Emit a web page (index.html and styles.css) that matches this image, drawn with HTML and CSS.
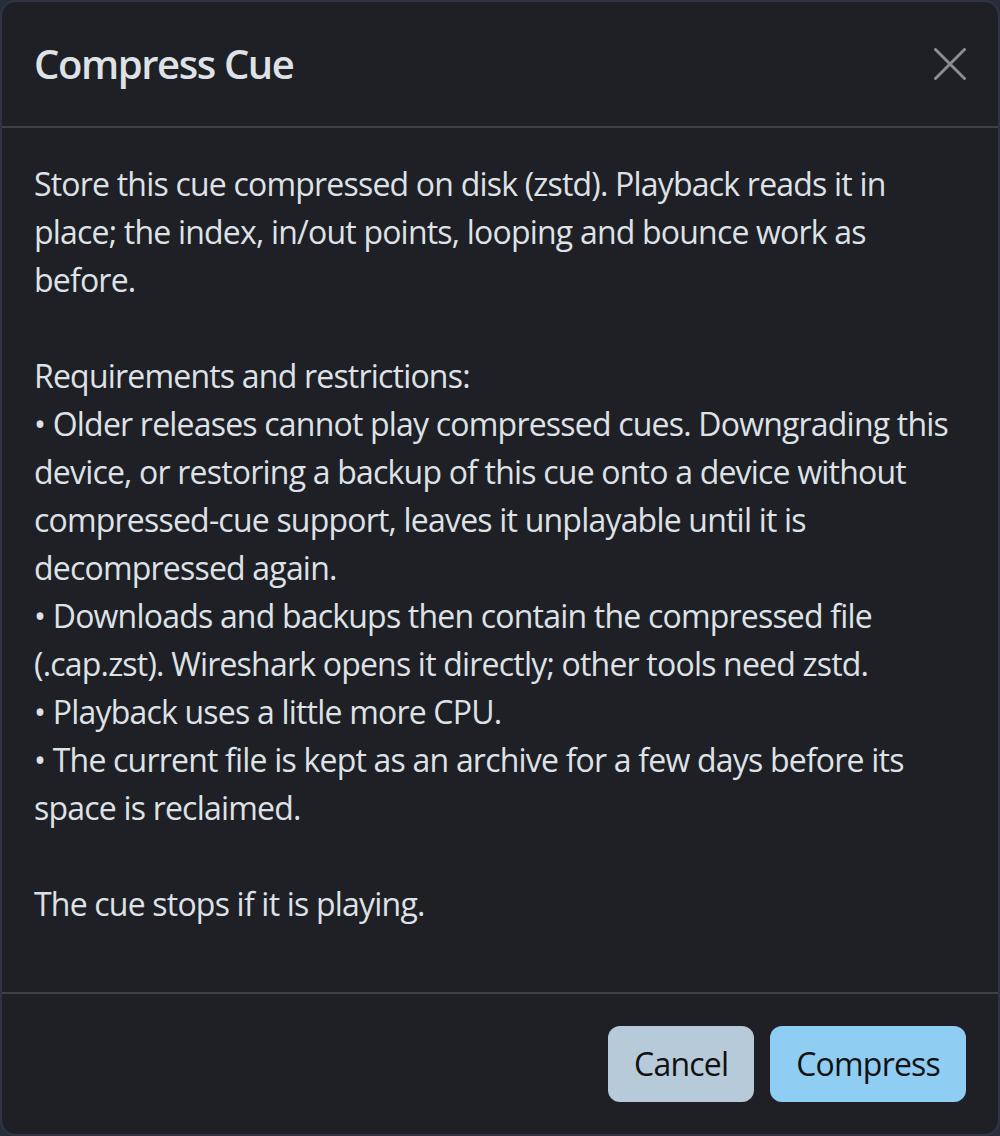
FILE: index.html
```html
<!DOCTYPE html>
<html lang="en">
<head>
  <meta charset="UTF-8" />
  <meta name="viewport" content="width=device-width, initial-scale=1.0"/>
  <title>Compress Cue</title>
  <link rel="stylesheet" href="styles.css">
</head>
<body>

  <div class="modal">
    <div class="modal-header">
      <h5 class="modal-title">Compress Cue</h5>
      <button class="btn-close" aria-label="Close">
        <svg width="32" height="32" viewBox="0 0 32 32">
          <path d="M1.5 1.5 L30.5 30.5 M30.5 1.5 L1.5 30.5" stroke="currentColor" stroke-width="3" stroke-linecap="round" fill="none"/>
        </svg>
      </button>
    </div>
    <div class="modal-body">
      <p class="msg">Store this cue compressed on disk (zstd). Playback reads it in place; the index, in/out points, looping and bounce work as before.

Requirements and restrictions:
• Older releases cannot play compressed cues. Downgrading this device, or restoring a backup of this cue onto a device without compressed-cue support, leaves it unplayable until it is decompressed again.
• Downloads and backups then contain the compressed file (.cap.zst). Wireshark opens it directly; other tools need zstd.
• Playback uses a little more CPU.
• The current file is kept as an archive for a few days before its space is reclaimed.

The cue stops if it is playing.</p>
    </div>
    <div class="modal-footer">
      <button class="btn btn-cancel">Cancel</button>
      <button class="btn btn-primary">Compress</button>
    </div>
  </div>

</body>
</html>
```

FILE: styles.css
```css
html, body {
  margin: 0;
  padding: 0;
}

body {
  background: #272c3a;
  color: #dee2e6;
  font-family: 'Segoe UI', 'Open Sans', sans-serif;
  font-size: 32px;
  line-height: 1.5;
  letter-spacing: -0.8px;
}

.modal {
  width: 1000px;
  height: 1136px;
  box-sizing: border-box;
  background: #1e2025;
  border: 2px solid #2e3443;
  border-radius: 16px;
  display: flex;
  flex-direction: column;
}

.modal-header {
  display: flex;
  align-items: center;
  justify-content: space-between;
  padding: 32px;
  border-bottom: 2px solid #3c4146;
}

.modal-title {
  margin: 0;
  font-size: 40px;
  font-weight: 600;
  line-height: 1.5;
  letter-spacing: -1.4px;
  color: #dee2e6;
}

.btn-close {
  background: transparent;
  border: none;
  padding: 0;
  width: 32px;
  height: 32px;
  color: #8a8c8f;
  cursor: pointer;
  display: flex;
}

.modal-body {
  padding: 32px;
  border-bottom: 2px solid #3c4146;
}

.msg {
  margin: 0 0 32px 0;
  white-space: pre-line;
}

.modal-footer {
  display: flex;
  justify-content: flex-end;
  gap: 16px;
  padding: 32px;
}

.btn {
  font-family: inherit;
  font-size: 32px;
  line-height: 1.5;
  letter-spacing: -0.8px;
  padding: 12px 24px;
  border: 2px solid transparent;
  border-radius: 12px;
  color: #111;
  cursor: pointer;
}

.btn-cancel {
  background: #b6cada;
}

.btn-primary {
  background: #8fcdf3;
}
```
